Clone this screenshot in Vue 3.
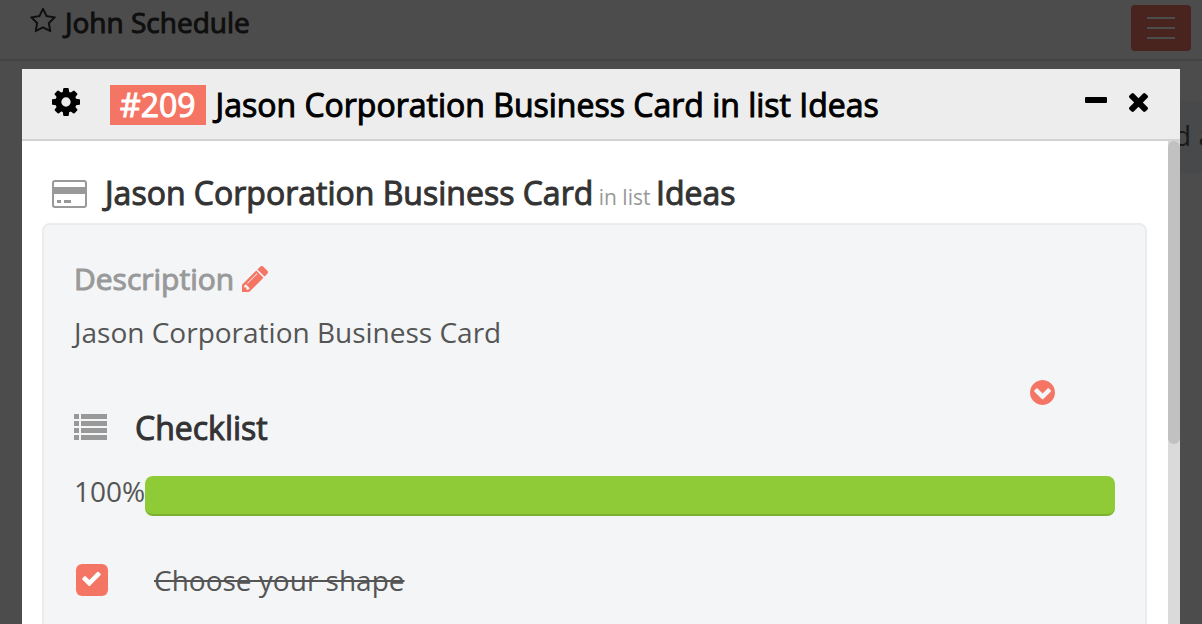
<script setup>
import { ref } from 'vue'

const board = 'John Schedule'
const card = { id: 209, title: 'Jason Corporation Business Card', list: 'Ideas' }
const progress = 100
const items = ref([{ id: 1, label: 'Choose your shape', done: true }])
</script>

<template>
  <div class="page">
    <header class="topbar">
      <div class="board">
        <svg class="star" viewBox="64 64 1664 1600" aria-hidden="true"><path d="M1201 1004l306-297-422-62-189-382-189 382-422 62 306 297-73 421 378-199 377 199zm527-357q0 22-26 48l-363 354 86 500q1 7 1 20 0 50-41 50-19 0-40-12l-449-236-449 236q-22 12-40 12-21 0-31.5-14.5t-10.5-35.5q0-6 2-20l86-500-364-354q-25-27-25-48 0-37 56-46l502-73 225-455q19-41 49-41t49 41l225 455 502 73q56 9 56 46z" /></svg>
        <h1 class="board-name">{{ board }}</h1>
      </div>
      <button class="menu" type="button" aria-label="Menu"><i></i><i></i><i></i></button>
    </header>
    <div class="lane"><span>d a</span></div>

    <div class="backdrop">
      <section class="modal" role="dialog" aria-labelledby="dialog-title">
        <header class="modal-head">
          <button class="icon-button" type="button" aria-label="Settings">
            <svg class="gear" viewBox="128 128 1536 1536"><path d="M1152 896q0-106-75-181t-181-75-181 75-75 181 75 181 181 75 181-75 75-181zm512-109v222q0 12-8 23t-20 13l-185 28q-19 54-39 91 35 50 107 138 10 12 10 25t-9 23q-27 37-99 108t-94 71q-12 0-26-9l-138-108q-44 23-91 38-16 136-29 186-7 28-36 28h-222q-14 0-24.5-8.5t-11.5-21.5l-28-184q-49-16-90-37l-141 107q-10 9-25 9-14 0-25-11-126-114-165-168-7-10-7-23 0-12 8-23 15-21 51-66.5t54-70.5q-27-50-41-99l-183-27q-13-2-21-12.5t-8-23.5v-222q0-12 8-23t19-13l186-28q14-46 39-92-40-57-107-138-10-12-10-24 0-10 9-23 26-36 98.5-107.5t94.5-71.5q13 0 26 10l138 107q44-23 91-38 16-136 29-186 7-28 36-28h222q14 0 24.5 8.5t11.5 21.5l28 184q49 16 90 37l142-107q9-9 24-9 13 0 25 10 129 119 165 170 7 8 7 22 0 12-8 23-15 21-51 66.5t-54 70.5q26 50 41 98l183 28q13 2 21 12.5t8 23.5z" /></svg>
          </button>
          <h2 id="dialog-title" class="modal-title">
            <span class="badge">#{{ card.id }}</span>
            <span>{{ card.title }} in list {{ card.list }}</span>
          </h2>
          <div class="window-buttons">
            <button class="icon-button" type="button" aria-label="Minimize">
              <svg class="minus" viewBox="0 0 22 24"><rect y="7" width="22" height="6" rx="1" /></svg>
            </button>
            <button class="icon-button" type="button" aria-label="Close">
              <svg class="times" viewBox="302 366 1188 1188"><path d="M1490 1322q0 40-28 68l-136 136q-28 28-68 28t-68-28l-294-294-294 294q-28 28-68 28t-68-28l-136-136q-28-28-28-68t28-68l294-294-294-294q-28-28-28-68t28-68l136-136q28-28 68-28t68 28l294 294 294-294q28-28 68-28t68 28l136 136q28 28 28 68t-28 68l-294 294 294 294q28 28 28 68z" /></svg>
            </button>
          </div>
        </header>

        <div class="modal-body">
          <div class="content">
            <div class="card-head">
              <svg class="card-icon" viewBox="0 0 35 28" aria-hidden="true">
                <rect x="1" y="1" width="33" height="26" rx="2" fill="none" stroke="currentColor" stroke-width="2" />
                <path d="M1 7h33v7H1zM5 20h4v3H5zM12 20h7v3h-7z" />
              </svg>
              <h3 class="card-title">{{ card.title }}<small>&#32;in list&#32;</small>{{ card.list }}</h3>
            </div>

            <div class="panel">
              <div class="section-head">
                <h4 class="description-title">Description</h4>
                <button class="icon-button" type="button" aria-label="Edit description">
                  <svg class="pencil" viewBox="128 149 1515 1515"><path d="M491 1536l91-91-235-235-91 91v107h128v128h107zm523-928q0-22-22-22-10 0-17 7l-542 542q-7 7-7 17 0 22 22 22 10 0 17-7l542-542q7-7 7-17zm-54-192l416 416-832 832h-416v-416zm683 96q0 53-37 90l-166 166-416-416 166-165q36-38 90-38 53 0 91 38l235 234q37 39 37 91z" /></svg>
                </button>
              </div>
              <p class="text">{{ card.title }}</p>

              <div class="collapse">
                <button class="icon-button" type="button" aria-label="Collapse checklist">
                  <svg class="chevron" viewBox="128 128 1536 1536"><path d="M946 1299l454-454q19-19 19-45t-19-45l-102-102q-19-19-45-19t-45 19l-307 307-307-307q-19-19-45-19t-45 19l-102 102q-19 19-19 45t19 45l454 454q19 19 45 19t45-19zm718-403q0 209-103 385.5t-279.5 279.5-385.5 103-385.5-103-279.5-279.5-103-385.5 103-385.5 279.5-279.5 385.5-103 385.5 103 279.5 279.5 103 385.5z" /></svg>
                </button>
              </div>
              <div class="checklist-head">
                <svg class="list-icon" viewBox="0 0 33 26" aria-hidden="true"><path d="M0 0h5v5H0zM7 0h26v5H7zM0 7h5v5H0zM7 7h26v5H7zM0 14h5v5H0zM7 14h26v5H7zM0 21h5v5H0zM7 21h26v5H7z" /></svg>
                <h4 class="checklist-title">Checklist</h4>
              </div>
              <div class="progress-row">
                <span class="text">{{ progress }}%</span>
                <div class="track" role="progressbar" :aria-valuenow="progress" aria-label="Checklist progress">
                  <div class="bar" :style="{ width: progress + '%' }"></div>
                </div>
              </div>
              <label v-for="item in items" :key="item.id" class="item">
                <span class="check">
                  <input v-model="item.done" type="checkbox" />
                  <svg v-if="item.done" viewBox="121 270 1550 1252"><path d="M1671 566q0 40-28 68l-724 724-136 136q-28 28-68 28t-68-28l-136-136-362-362q-28-28-28-68t28-68l136-136q28-28 68-28t68 28l294 295 656-657q28-28 68-28t68 28l136 136q28 28 28 68z" /></svg>
                </span>
                <span class="text" :class="{ done: item.done }">{{ item.label }}</span>
              </label>
            </div>
          </div>
          <div class="scrollbar"><div class="thumb"></div></div>
        </div>
      </section>
    </div>
  </div>
</template>

<style>
body {
  margin: 0;
  overflow: hidden;
}
</style>

<style scoped>
.page {
  min-height: 100vh;
  background: #fff;
  color: #555;
  font-family: "Open Sans", sans-serif;
  font-size: 28px;
  overflow: hidden;
}
h1, h2, h3, h4, p {
  margin: 0;
  font-weight: 400;
}
h1, h2, h3, h4 {
  -webkit-text-stroke: 1px currentColor;
}
svg {
  display: block;
  fill: currentColor;
}
.topbar {
  display: flex;
  justify-content: space-between;
  box-sizing: border-box;
  height: 61px;
  padding: 4px 11px 0 30px;
  border-bottom: 2px solid #e0e0e0;
}
.board {
  display: flex;
  gap: 9px;
  color: #333;
}
.star {
  width: 26px;
  height: 25px;
  margin-top: 4px;
}
.board-name {
  font-size: 28px;
  line-height: 36px;
}
.menu {
  display: flex;
  flex-direction: column;
  align-items: center;
  justify-content: center;
  gap: 8px;
  width: 60px;
  height: 46px;
  margin-top: 1px;
  padding: 0;
  border: 0;
  border-radius: 4px;
  background: #f47564;
}
.menu i {
  width: 28px;
  height: 2px;
  background: #fff;
}
.lane {
  display: flex;
  justify-content: flex-end;
  width: 50%;
  height: 72px;
  margin: 40px 0 0 auto;
  background: #f0f4f8;
  line-height: 68px;
}
.lane span {
  width: 28px;
  white-space: nowrap;
}
.backdrop {
  position: fixed;
  inset: 0;
  display: flex;
  padding: 69px 22px 0;
  background: rgba(0, 0, 0, 0.7);
}
.modal {
  display: flex;
  flex: 1;
  flex-direction: column;
  min-width: 0;
  background: #fff;
}
.icon-button {
  padding: 0;
  border: 0;
  background: none;
  color: inherit;
}
.modal-head {
  display: flex;
  align-items: center;
  gap: 30px;
  padding: 13px 32px 11px 30px;
  border-bottom: 2px solid #d2d2d2;
  background: #ededed;
  color: #000;
}
.gear {
  width: 28px;
  height: 28px;
  margin-bottom: 6px;
}
.modal-title {
  display: flex;
  align-items: center;
  gap: 10px;
  flex: 1;
  font-size: 32px;
  line-height: 46px;
}
.badge {
  padding: 0 10px;
  background: #f47564;
  color: #fff;
  line-height: 40px;
}
.window-buttons {
  display: flex;
  align-items: center;
  gap: 22px;
  margin-bottom: 6px;
}
.minus {
  width: 22px;
  height: 24px;
}
.times {
  width: 19px;
  height: 19px;
}
.modal-body {
  display: flex;
  flex: 1;
  min-height: 0;
}
.content {
  flex: 1;
  padding: 30px 21px 0 20px;
  overflow: hidden;
}
.card-head {
  display: flex;
  align-items: center;
  gap: 18px;
  padding: 0 10px 4px;
}
.card-icon {
  width: 35px;
  height: 28px;
  margin-bottom: 2px;
  color: #999;
}
.card-title {
  color: #333;
  font-size: 32px;
  line-height: 44px;
}
.card-title small {
  color: #999;
  font-size: 21px;
  -webkit-text-stroke: 0;
}
.panel {
  min-height: 500px;
  padding: 31px 30px;
  border: 2px solid #ebecee;
  border-radius: 8px;
  background: #f3f5f7;
}
.section-head {
  display: flex;
  align-items: center;
  gap: 8px;
  color: #f47564;
}
.description-title {
  color: #999;
  font-size: 30px;
  line-height: 46px;
}
.pencil {
  width: 26px;
  height: 26px;
}
.text {
  line-height: 40px;
}
.section-head + .text {
  margin-top: 10px;
}
.collapse {
  display: flex;
  justify-content: flex-end;
  padding: 28px 60px 0 0;
  color: #f47564;
}
.chevron {
  width: 25px;
  height: 25px;
}
.checklist-head {
  display: flex;
  align-items: center;
  gap: 28px;
}
.list-icon {
  width: 33px;
  height: 26px;
  margin-bottom: 2px;
  color: #999;
}
.checklist-title {
  color: #333;
  font-size: 32px;
  line-height: 46px;
}
.progress-row {
  display: flex;
  align-items: flex-start;
  margin-top: 20px;
}
.track {
  flex: 1;
  margin-top: 5px;
}
.bar {
  box-sizing: border-box;
  height: 40px;
  border-bottom: 2px solid #7bb030;
  border-radius: 8px;
  background: #8ecb36;
}
.item {
  display: flex;
  align-items: center;
  gap: 46px;
  margin-top: 44px;
  padding-left: 2px;
}
.check {
  display: grid;
  place-items: center;
}
.check > * {
  grid-area: 1 / 1;
}
.check input {
  width: 32px;
  height: 32px;
  margin: 0;
  border-radius: 6px;
  appearance: none;
  background: #f47564;
}
.check svg {
  width: 19px;
  height: 15px;
  margin: 0 2px 4px 0;
  color: #fff;
  pointer-events: none;
}
.done {
  text-decoration: line-through;
}
.scrollbar {
  width: 12px;
  background: #dadada;
}
.thumb {
  height: 303px;
  border-radius: 6px;
  background: #c1c1c1;
}
</style>
